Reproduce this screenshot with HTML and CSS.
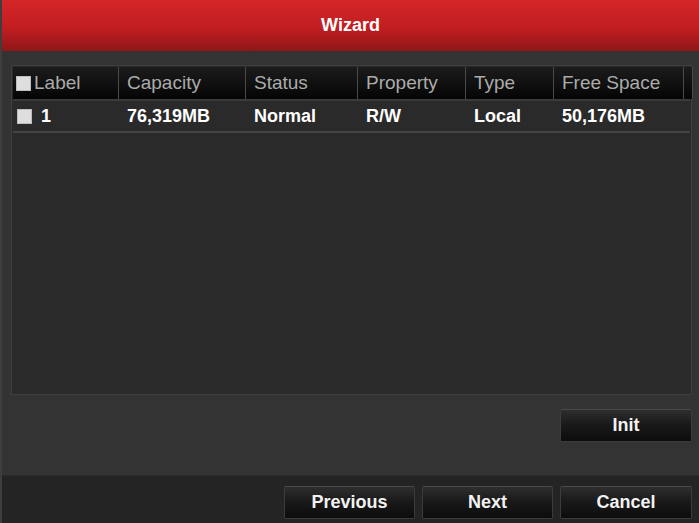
FILE: index.html
```html
<!DOCTYPE html>
<html lang="en">
<head>
  <meta charset="UTF-8" />
  <meta name="viewport" content="width=device-width, initial-scale=1.0" />
  <title>Wizard</title>
  <link rel="stylesheet" href="styles.css">
</head>
<body>
  <div class="wizard">
    <div class="title">Wizard</div>

    <div class="content">
      <div class="panel">
        <div class="row head">
          <div class="cell"><span class="check"></span>Label</div>
          <div class="cell">Capacity</div>
          <div class="cell">Status</div>
          <div class="cell">Property</div>
          <div class="cell">Type</div>
          <div class="cell">Free Space</div>
          <div class="cell"></div>
        </div>
        <div class="row data">
          <div class="cell"><span class="check"></span>1</div>
          <div class="cell">76,319MB</div>
          <div class="cell">Normal</div>
          <div class="cell">R/W</div>
          <div class="cell">Local</div>
          <div class="cell">50,176MB</div>
          <div class="cell"></div>
        </div>
      </div>

      <div class="init-row">
        <button class="btn">Init</button>
      </div>
    </div>

    <div class="footer">
      <button class="btn">Previous</button>
      <button class="btn">Next</button>
      <button class="btn">Cancel</button>
    </div>
  </div>
</body>
</html>
```

FILE: styles.css
```css
body {
  margin: 0;
  font-family: 'Liberation Sans', Arial, sans-serif;
  background: #333333;
}

.wizard {
  width: 699px;
  height: 523px;
  display: flex;
  flex-direction: column;
  background: #333333;
  border-left: 2px solid #3e3e3e;
  box-sizing: border-box;
}

.title {
  height: 51px;
  display: flex;
  align-items: center;
  justify-content: center;
  color: #ffffff;
  font-size: 18px;
  font-weight: bold;
  background: linear-gradient(to bottom, #d52528 0%, #c11e22 55%, #8f1618 100%);
  flex-shrink: 0;
}

.content {
  flex: 1;
  padding: 14px 7px 0 9px;
  display: flex;
  flex-direction: column;
}

.panel {
  height: 330px;
  background-color: #2b2b2b;
  background-image:
    linear-gradient(45deg, #292929 25%, transparent 25%, transparent 75%, #292929 75%),
    linear-gradient(45deg, #292929 25%, transparent 25%, transparent 75%, #292929 75%);
  background-size: 4px 4px;
  background-position: 0 0, 2px 2px;
  border: 1px solid #3f3f3f;
  box-sizing: border-box;
  padding: 1px;
}

.row {
  display: grid;
  grid-template-columns: 106px 127px 112px 108px 88px 130px 1fr;
}

.head {
  height: 32px;
  border-bottom: 2px solid #3a3a3a;
}

.head .cell {
  background: linear-gradient(to bottom, #1c1c1c, #050505);
  border-right: 1px solid #4a4a4a;
  color: #ababab;
  font-size: 19px;
}

.data {
  height: 30px;
  border-bottom: 2px solid #444444;
  color: #ffffff;
  font-weight: bold;
}

.cell {
  display: flex;
  align-items: center;
  padding-left: 8px;
  font-size: 18px;
  white-space: nowrap;
  overflow: hidden;
}

.check {
  width: 15px;
  height: 15px;
  background: #dedede;
  border: 1px solid #bdbdbd;
  box-sizing: border-box;
  margin-left: -5px;
  margin-right: 3px;
  flex-shrink: 0;
}

.data .check {
  margin-left: -4px;
  margin-right: 9px;
}

.init-row {
  display: flex;
  justify-content: flex-end;
  padding-top: 14px;
}

.btn {
  width: 132px;
  height: 33px;
  font-family: 'Liberation Sans', Arial, sans-serif;
  font-size: 18px;
  font-weight: bold;
  color: #f2f2f2;
  background: linear-gradient(to bottom, #2e2e2e 0%, #1a1a1a 45%, #0c0c0c 100%);
  border: 1px solid #3c3c3c;
  border-top-color: #4a4a4a;
  border-radius: 2px;
  padding: 0;
}

.footer {
  height: 48px;
  flex-shrink: 0;
  background: #242424;
  border-top: 1px solid #2c2c2c;
  box-sizing: border-box;
  display: flex;
  justify-content: flex-end;
  align-items: flex-start;
  gap: 7px;
  padding: 10px 7px 0 0;
}

.footer .btn:nth-child(1) {
  width: 131px;
}

.footer .btn:nth-child(2) {
  width: 131px;
}
```
